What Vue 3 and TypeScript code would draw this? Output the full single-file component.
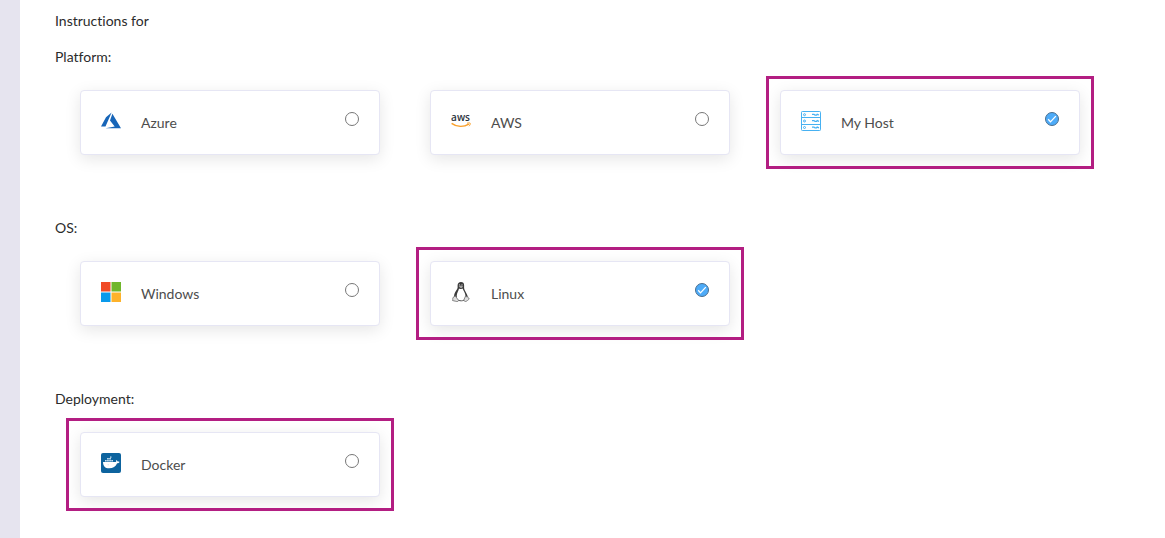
<script setup lang="ts">
import { reactive } from 'vue'

interface Option {
  id: string
  label: string
  highlighted?: boolean
}
interface Group {
  id: string
  title: string
  options: Option[]
}

const groups: Group[] = [
  {
    id: 'platform',
    title: 'Platform:',
    options: [
      { id: 'azure', label: 'Azure' },
      { id: 'aws', label: 'AWS' },
      { id: 'host', label: 'My Host', highlighted: true },
    ],
  },
  {
    id: 'os',
    title: 'OS:',
    options: [
      { id: 'windows', label: 'Windows' },
      { id: 'linux', label: 'Linux', highlighted: true },
    ],
  },
  {
    id: 'deployment',
    title: 'Deployment:',
    options: [{ id: 'docker', label: 'Docker', highlighted: true }],
  },
]

const selected = reactive<Record<string, string>>({ platform: 'host', os: 'linux', deployment: '' })
</script>

<template>
  <main class="page">
    <p class="text">Instructions for</p>
    <section v-for="group in groups" :key="group.id" class="group">
      <h2 :id="group.id + '-title'" class="text">{{ group.title }}</h2>
      <div class="cards" role="radiogroup" :aria-labelledby="group.id + '-title'">
        <label
          v-for="option in group.options"
          :key="option.id"
          class="card"
          :class="{ highlighted: option.highlighted }"
        >
          <svg v-if="option.id === 'azure'" class="icon" viewBox="0 0 20 20" aria-hidden="true">
            <path fill="#1765b8" d="M10.6 1.4 5 6.3 0 15.4h4.5zM11.4 2.7 9 9.6l4.7 5.9-9.1 1.7H20z" />
          </svg>
          <svg v-else-if="option.id === 'aws'" class="icon" viewBox="0 0 20 20" aria-hidden="true">
            <text x="9.5" y="10" text-anchor="middle" class="aws-word">aws</text>
            <path fill="none" stroke="#f9a02b" stroke-width="1.5" d="M.6 12.3c5.2 3.8 12 4 17.3.8" />
            <path fill="none" stroke="#f9a02b" stroke-width="1" d="M16 12.2c1.5-.4 2.9-.4 3.2 0 .3.5-.2 2-1.2 3" />
          </svg>
          <svg v-else-if="option.id === 'host'" class="icon" viewBox="0 0 20 20" aria-hidden="true">
            <g fill="none" stroke="#47b1f2">
              <rect x=".5" y=".5" width="19" height="19" rx=".8" />
              <path d="M.5 6.5h19M.5 13.5h19" />
              <circle cx="3.5" cy="3.7" r="1" />
              <circle cx="3.5" cy="10" r="1" />
              <circle cx="3.5" cy="16.5" r="1" />
              <path stroke-width="1.3" d="M11 3.3h2l1 .8h1.5l.7-.8 1.8.7M11 9.6h2l1 .8h1.5l.7-.8 1.8.7M11 16.1h2l1 .8h1.5l.7-.8 1.8.7" />
            </g>
          </svg>
          <svg v-else-if="option.id === 'windows'" class="icon" viewBox="0 0 20 20" aria-hidden="true">
            <path fill="#f04b27" d="M0 0h9.5v9.5H0z" />
            <path fill="#70b62b" d="M10.5 0H20v9.5h-9.5z" />
            <path fill="#0a9aeb" d="M0 10.5h9.5V20H0z" />
            <path fill="#fdb22b" d="M10.5 10.5H20V20h-9.5z" />
          </svg>
          <svg v-else-if="option.id === 'linux'" class="icon" viewBox="0 0 20 20" aria-hidden="true">
            <path fill="#3a3a3a" d="M10 0C7.9 0 6.6 1.3 6.6 3.3v2.4c0 1.6-2.6 3.8-3.2 6.4-.3 1.3-.3 2.5-.8 3.4h14.3c-.4-4-3.8-6.8-3.8-9.8V3c0-2-1.1-3-3.1-3z" />
            <path fill="#fff" d="M8 6.5c1.4.8 2.5.7 3.6-.1.8 2.4 2.9 4.6 2.9 7.6 0 2.5-2.1 4.1-4.7 4.1-2.3 0-4.1-1.5-4.1-4 0-3.1 1.9-5.1 2.3-7.6z" />
            <path fill="#a5a5a5" d="M7.6 4.6 9.8 3.6l2.4 1-2 1.8z" />
            <circle cx="8.5" cy="2.9" r=".7" fill="#ccc" />
            <circle cx="11" cy="2.9" r=".7" fill="#ccc" />
            <path fill="#dedede" stroke="#777" stroke-width=".9" d="m4.1 13.8 3.5 4.6c-.4 1.5-2 1.3-3.3.8L1.5 18.5c.6-1.1-.1-2.6.5-3 .8-.1 1.4-.8 2.1-1.7zM14.6 14c.6 1 1.5.8 2.1.5.1 1.2 1 1.8 1.6 2.5-1.1.7-2.4 2.4-3.8 2.5-1.4.1-1.6-1.1-1.3-2.4z" />
            <path fill="none" stroke="#555" stroke-width="1" d="M7.5 18.3c2 .7 3.8.7 5.5-.2" />
          </svg>
          <svg v-else class="icon" viewBox="0 0 20 20" aria-hidden="true">
            <rect width="20" height="20" rx="2" fill="#0d639e" />
            <path fill="#fff" d="M2 9h12.7c.6-.3.7-1.1.4-2.1.9.4 1.3.9 1.5 1.6.8-.1 1.4 0 2 .4-.5.9-1.3 1.3-2.5 1.3-1.4 3.5-4 5.1-8 5.1-4 0-6-2.1-6.1-6.3z" />
            <path fill="#c9e0f0" d="M4 7h1.7v1.6H4zM6.1 7h1.7v1.6H6.1zM8.2 7h1.7v1.6H8.2zM10.3 7H12v1.6h-1.7zM6.1 5.1h1.7v1.5H6.1zM8.2 5.1h1.7v1.5H8.2zM9 3.6h1.5v1.2H9z" />
            <circle cx="7.1" cy="11.8" r=".4" fill="#5d98bf" />
          </svg>
          <span class="name">{{ option.label }}</span>
          <span class="radio">
            <input v-model="selected[group.id]" type="radio" :name="group.id" :value="option.id" />
            <svg class="tick" viewBox="0 0 14 14" aria-hidden="true">
              <path d="m3.2 7.3 2.3 2.6 5.3-5.8" />
            </svg>
          </span>
        </label>
      </div>
    </section>
  </main>
</template>

<style>
body {
  margin: 0;
  background: #fff;
}
</style>

<style scoped>
.page {
  box-sizing: border-box;
  min-height: 100vh;
  padding: 11px 35px 26px;
  border-left: 20px solid #e6e4ef;
  font-family: Lato, 'Liberation Sans', sans-serif;
  font-size: 14px;
  font-variant-ligatures: none;
  color: #2b2b2b;
}
.text {
  margin: 0;
  font-size: 14px;
  font-weight: 400;
  line-height: 20px;
}
.group {
  margin-top: 16px;
}
.group + .group {
  margin-top: 63px;
}
.cards {
  display: flex;
  flex-wrap: wrap;
  gap: 50px;
  margin-top: 23px;
  padding-left: 25px;
}
.card {
  position: relative;
  box-sizing: border-box;
  display: flex;
  align-items: flex-start;
  gap: 20px;
  width: 300px;
  padding: 20px;
  border: 1px solid #e6e6f4;
  border-radius: 4px;
  background: #fff;
  box-shadow: 0 4px 16px rgba(0, 0, 0, 0.1);
  cursor: pointer;
}
.highlighted::after {
  content: '';
  position: absolute;
  inset: -15px;
  border: 3px solid #b31e82;
  pointer-events: none;
}
.icon {
  flex: none;
  width: 20px;
  height: 20px;
}
.aws-word {
  font-family: 'Open Sans', sans-serif;
  font-size: 10px;
  font-weight: 600;
  fill: #2b3440;
}
.name {
  flex: 1;
  line-height: 23px;
  color: #4d4d4d;
}
.radio {
  display: grid;
  margin-top: 1px;
}
.radio input,
.tick {
  grid-area: 1 / 1;
  width: 14px;
  height: 14px;
}
.radio input {
  appearance: none;
  box-sizing: border-box;
  margin: 0;
  border: 1px solid #777;
  border-radius: 50%;
  background: #fff;
  cursor: pointer;
}
.radio input:checked {
  border-color: #4a6e8e;
  background: #4dabf8;
}
.tick {
  visibility: hidden;
  fill: none;
  stroke: #fff;
  stroke-width: 1.3;
  pointer-events: none;
}
.radio input:checked + .tick {
  visibility: visible;
}
</style>
